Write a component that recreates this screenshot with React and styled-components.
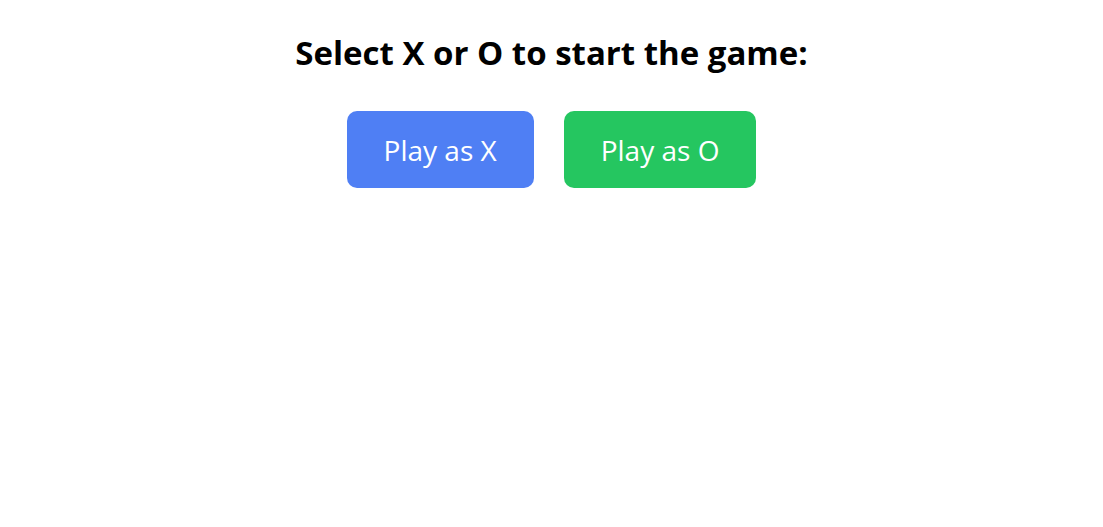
import React from 'react'
import styled, { createGlobalStyle } from 'styled-components'

const GlobalStyle = createGlobalStyle`
  body {
    margin: 0;
    background: #ffffff;
    font-family: "Open Sans", "Noto Sans", sans-serif;
  }
`

const Page = styled.div`
  display: flex;
  flex-direction: column;
  align-items: center;
  padding-top: 29px;
`

const Title = styled.h2`
  margin: 0;
  font-size: 33px;
  line-height: 48px;
  font-weight: 700;
  color: #000000;
`

const Choices = styled.div`
  display: flex;
  gap: 30px;
  margin-top: 34px;
`

const ChoiceButton = styled.button`
  border: none;
  border-radius: 10px;
  height: 77px;
  padding: 0 37px;
  font-family: inherit;
  font-size: 28px;
  color: #ffffff;
  cursor: pointer;
  background: ${({ $color }) => $color};
`

export default function App() {
  return (
    <>
      <GlobalStyle />
      <Page>
        <Title>Select X or O to start the game:</Title>
        <Choices>
          <ChoiceButton $color="#4f7ff4">Play as X</ChoiceButton>
          <ChoiceButton $color="#25c660">Play as O</ChoiceButton>
        </Choices>
      </Page>
    </>
  )
}
